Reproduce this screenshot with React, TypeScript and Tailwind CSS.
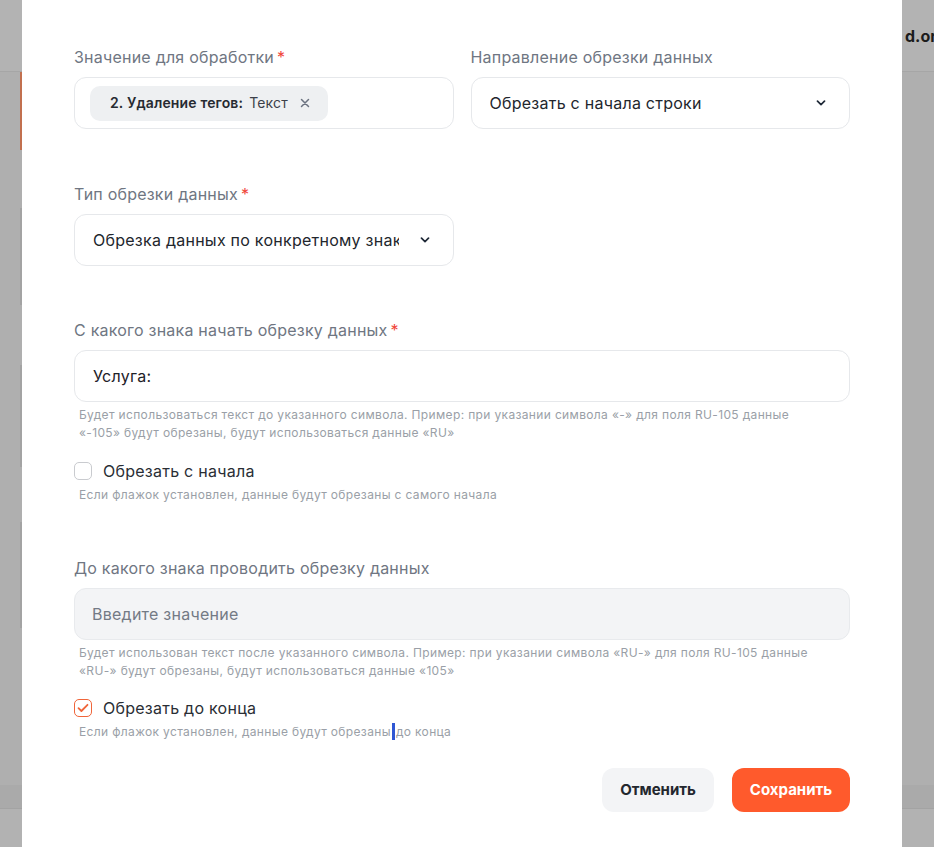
import { useState } from 'react'

function Required() {
  return <span className="ml-[3px] text-[#f04438]">*</span>
}

function Chevron() {
  return (
    <svg width="10" height="6" viewBox="0 0 10 6" fill="none" className="shrink-0">
      <path
        d="M1.5 1.2 5 4.6l3.5-3.4"
        stroke="#1f2937"
        strokeWidth="1.7"
        strokeLinecap="round"
        strokeLinejoin="round"
      />
    </svg>
  )
}

function Label({ children, required }: { children: React.ReactNode; required?: boolean }) {
  return (
    <div className="mb-2 text-base leading-6 tracking-[0.22px] text-[#6f7682]">
      {children}
      {required && <Required />}
    </div>
  )
}

function Select({ value }: { value: string }) {
  return (
    <div className="flex h-[52px] items-center gap-[21px] rounded-xl border border-[#e6e8eb] bg-white pl-[18px] pr-[23px]">
      <div className="min-w-0 flex-1 overflow-hidden whitespace-nowrap text-base tracking-[0.25px] text-[#22262d]">
        {value}
      </div>
      <Chevron />
    </div>
  )
}

function Help({ children }: { children: React.ReactNode }) {
  return (
    <div className="pl-[5px] text-xs leading-[18px] tracking-[0.35px] text-[#9a9fa7]">
      {children}
    </div>
  )
}

function Checkbox({
  checked,
  label,
  onToggle,
}: {
  checked: boolean
  label: string
  onToggle: () => void
}) {
  return (
    <label className="flex h-6 cursor-pointer items-center gap-[11px]" onClick={onToggle}>
      <span
        className={`flex h-[18px] w-[18px] items-center justify-center rounded-[5px] border-[1.5px] bg-white ${
          checked ? 'border-[#f0653a]' : 'border-[#c9cbcf]'
        }`}
      >
        {checked && (
          <svg width="12" height="10" viewBox="0 0 12 10" fill="none">
            <path
              d="M1.5 5.2 4.4 8 10.5 1.8"
              stroke="#f0653a"
              strokeWidth="1.8"
              strokeLinecap="round"
              strokeLinejoin="round"
            />
          </svg>
        )}
      </span>
      <span className="text-base tracking-[0.25px] text-[#2a2e35]">{label}</span>
    </label>
  )
}

export default function App() {
  const [fromStart, setFromStart] = useState(false)
  const [toEnd, setToEnd] = useState(true)

  return (
    <div className="relative h-[847px] w-[934px] overflow-hidden bg-[#afafaf] font-['Inter','Noto_Sans',sans-serif]">
      {/* page behind the overlay */}
      <div className="flex h-full flex-col">
        <div className="flex h-[72px] shrink-0 items-center whitespace-nowrap border-b border-[#a6a6a6] bg-[#b3b3b3] pl-[905px]">
          <span className="text-base font-bold text-[#1c1c1c]">d.org</span>
        </div>
        <div className="flex flex-1 flex-row">
          <div className="flex w-[22px] flex-col">
            <div className="h-[78px] border-r-2 border-[#c2704f]"></div>
            <div className="mt-[58px] h-[97px] border-r-2 border-[#a3a3a3]"></div>
            <div className="mt-[60px] h-[102px] border-r-2 border-[#a3a3a3]"></div>
            <div className="mt-[55px] h-[106px] border-r-2 border-[#a3a3a3]"></div>
          </div>
          <div className="flex-1"></div>
        </div>
        <div className="h-[24px] shrink-0 border-b border-[#a3a3a3] bg-[#aaaaaa]"></div>
        <div className="h-[38px] shrink-0 bg-[#b2b2b2]"></div>
      </div>

      {/* modal */}
      <div className="absolute bottom-0 left-[22px] top-0 w-[880px] bg-white px-[52px] pt-[45px]">
        <div className="grid grid-cols-2 gap-x-[17px]">
          <div>
            <Label required>Значение для обработки</Label>
            <div className="flex h-[52px] items-center rounded-xl border border-[#e6e8eb] bg-white px-[15px]">
              <div className="flex h-[35px] items-center rounded-[10px] bg-[#eef0f2] pl-5 pr-[18px] text-sm tracking-[0.15px]">
                <span className="font-semibold text-[#262a31]">2. Удаление тегов:</span>
                <span className="ml-[6px] text-[#3b4049]">Текст</span>
                <svg className="ml-3" width="10" height="10" viewBox="0 0 10 10" fill="none">
                  <path
                    d="M1.5 1.5l7 7M8.5 1.5l-7 7"
                    stroke="#6b7280"
                    strokeWidth="1.5"
                    strokeLinecap="round"
                  />
                </svg>
              </div>
            </div>
          </div>
          <div>
            <Label>Направление обрезки данных</Label>
            <Select value="Обрезать с начала строки" />
          </div>
        </div>

        <div className="mt-[53px] grid grid-cols-2 gap-x-[17px]">
          <div>
            <Label required>Тип обрезки данных</Label>
            <Select value="Обрезка данных по конкретному знаку" />
          </div>
        </div>

        <div className="mt-[52px]">
          <Label required>С какого знака начать обрезку данных</Label>
          <div className="flex h-[52px] items-center rounded-xl border border-[#e6e8eb] bg-white px-[18px] text-base tracking-[0.25px] text-[#1d2128]">
            Услуга:
          </div>
          <div className="mt-1">
            <Help>
              Будет использоваться текст до указанного символа. Пример: при указании символа «-» для
              поля RU-105 данные
              <br />
              «-105» будут обрезаны, будут использоваться данные «RU»
            </Help>
          </div>
          <div className="mt-[17px]">
            <Checkbox
              checked={fromStart}
              label="Обрезать с начала"
              onToggle={() => setFromStart(!fromStart)}
            />
          </div>
          <div className="mt-[3px]">
            <Help>Если флажок установлен, данные будут обрезаны с самого начала</Help>
          </div>
        </div>

        <div className="mt-[52px]">
          <Label>До какого знака проводить обрезку данных</Label>
          <div className="flex h-[52px] items-center rounded-xl border border-[#e8eaed] bg-[#f3f4f6] px-[17px] text-base tracking-[0.25px] text-[#737a85]">
            Введите значение
          </div>
          <div className="mt-1">
            <Help>
              Будет использован текст после указанного символа. Пример: при указании символа «RU-»
              для поля RU-105 данные
              <br />
              «RU-» будут обрезаны, будут использоваться данные «105»
            </Help>
          </div>
          <div className="mt-4">
            <Checkbox checked={toEnd} label="Обрезать до конца" onToggle={() => setToEnd(!toEnd)} />
          </div>
          <div className="mt-[3px]">
            <Help>
              Если флажок установлен, данные будут обрезаны
              <span className="mx-px inline-block h-[17px] w-[3px] bg-[#2f57d4] align-[-4px]"></span>
              до конца
            </Help>
          </div>
        </div>

        <div className="mt-[27px] flex justify-end gap-[18px]">
          <button className="h-11 w-[112px] rounded-xl bg-[#f3f4f6] text-[15px] font-bold text-[#23272e]">
            Отменить
          </button>
          <button className="h-11 w-[118px] rounded-xl bg-[#ff5a2c] text-[15px] font-bold text-white">
            Сохранить
          </button>
        </div>
      </div>
    </div>
  )
}
